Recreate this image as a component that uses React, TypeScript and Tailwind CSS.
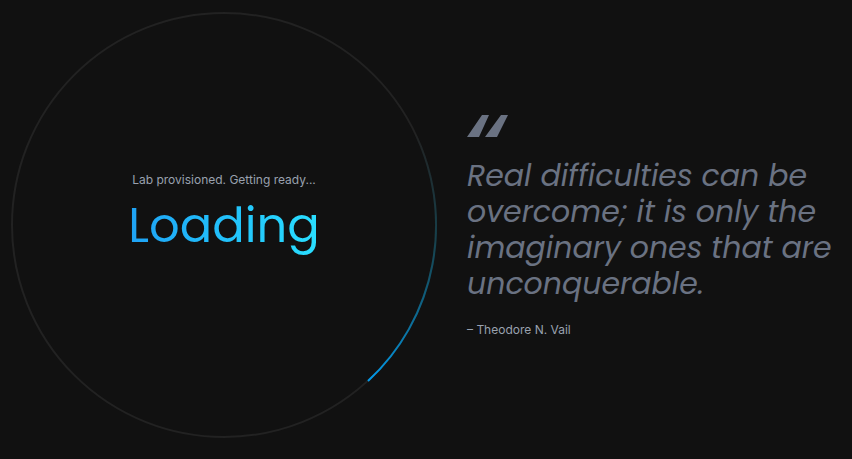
import React from "react";

const display = "font-['Poppins',sans-serif] font-normal";

function Spinner() {
  return (
    <svg viewBox="0 0 426 426" fill="none" aria-hidden="true" className="col-start-1 row-start-1 w-full">
      <defs>
        <linearGradient id="arc" gradientUnits="userSpaceOnUse" x1="400" y1="120" x2="357" y2="369">
          <stop offset="0" stopColor="#08708c" stopOpacity="0" />
          <stop offset="0.4" stopColor="#08708c" stopOpacity="0.4" />
          <stop offset="1" stopColor="#009cee" />
        </linearGradient>
      </defs>
      <circle cx="213" cy="213" r="212" stroke="#222222" strokeWidth="2" />
      <path d="M403.5 120A212 212 0 0 1 357 369" stroke="url(#arc)" strokeWidth="2" />
    </svg>
  );
}

export default function App() {
  return (
    <main className="flex min-h-screen items-center gap-[30px] bg-[#111111] pb-[9px] pl-[11px] font-['Inter',sans-serif]">
      <section role="status" className="grid w-[50vw] shrink-0 place-items-center">
        <Spinner />
        <div className="col-start-1 row-start-1 flex flex-col items-center pb-[18px]">
          <p className="text-xs leading-5 text-gray-400">Lab provisioned. Getting ready...</p>
          <h1 className={`${display} bg-linear-to-r from-[#1fa2f5] to-[#2adfff] bg-clip-text text-5xl leading-[72px] text-transparent`}>
            Loading
          </h1>
        </div>
      </section>
      <figure className="min-w-0 flex-1 pt-1.5">
        <svg viewBox="0 0 41 22" className="h-[22px] w-[41px] fill-gray-500" aria-hidden="true">
          <path d="M15 0H22L12 22H0ZM34 0H41L30 22H18Z" />
        </svg>
        <blockquote className={`${display} mt-[21px] text-3xl text-gray-500 italic`}>
          Real difficulties can be
          <br />
          overcome; it is only the
          <br />
          imaginary ones that are
          <br />
          unconquerable.
        </blockquote>
        <figcaption className="mt-[18px] pb-px text-xs leading-5 text-gray-400">– Theodore N. Vail</figcaption>
      </figure>
    </main>
  );
}
